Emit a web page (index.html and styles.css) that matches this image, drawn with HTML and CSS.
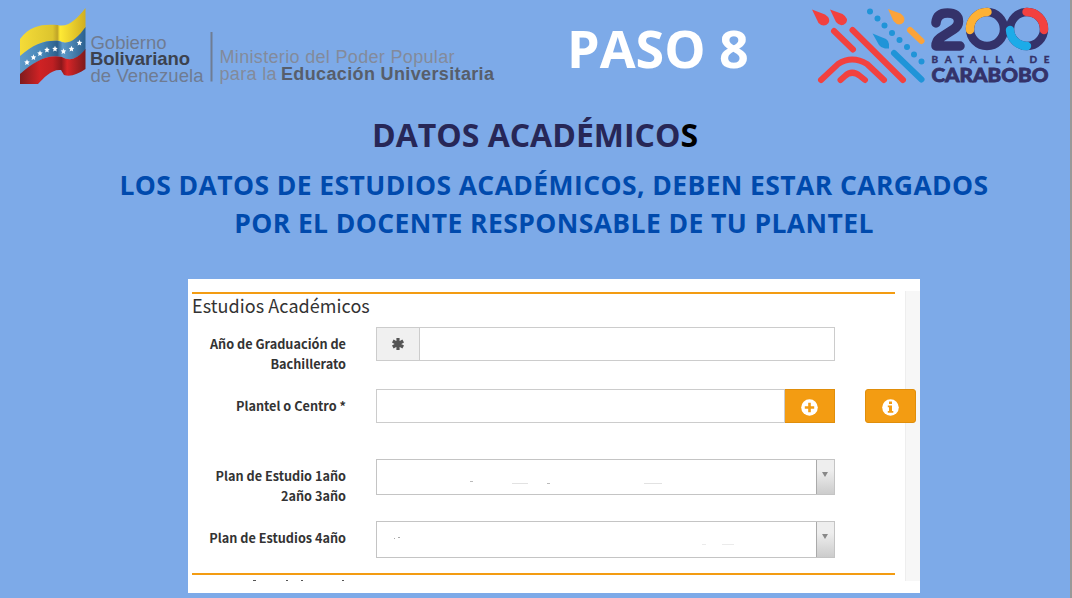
FILE: index.html
```html
<!DOCTYPE html>
<html lang="es">
<head>
<meta charset="utf-8">
<title>Paso 8 - Datos académicos</title>
<link rel="stylesheet" href="styles.css">
</head>
<body>
<main class="slide">
  <header class="header">
    <svg class="gov-logo" width="500" height="96" viewBox="0 0 500 96" role="img" aria-label="Gobierno Bolivariano de Venezuela">
      <defs>
        <linearGradient id="yellow" x1="0" x2="1"><stop offset="0" stop-color="#f5dc38"/><stop offset=".5" stop-color="#dcc42e"/><stop offset=".57" stop-color="#c0a428"/><stop offset=".61" stop-color="#ffea35"/><stop offset="1" stop-color="#d0ae22"/></linearGradient>
        <linearGradient id="blue" x1="0" x2="1"><stop offset="0" stop-color="#5f9bcb"/><stop offset=".35" stop-color="#4585b5"/><stop offset=".57" stop-color="#2c5f8c"/><stop offset=".65" stop-color="#5f9bc9"/><stop offset="1" stop-color="#2b608e"/></linearGradient>
        <linearGradient id="red" x1="0" x2="1"><stop offset="0" stop-color="#7e1b1d"/><stop offset=".3" stop-color="#cf2224"/><stop offset=".5" stop-color="#bf1f22"/><stop offset=".63" stop-color="#8c181b"/><stop offset=".72" stop-color="#d82527"/><stop offset="1" stop-color="#7d1a1c"/></linearGradient>
      </defs>
      <path fill="url(#yellow)" d="M20 39C31 24 45 24 57.500 25C68 28 77 19 85.500 8V28C77 40 69 46 60 41C45 40 34 44 20 57Z"/>
      <path fill="url(#blue)" d="M20 56C34 44 45 40 59 41C68 46 77 39 85.500 27V50C78 58 71 62 62 57C47 54 34 62 20 75Z"/>
      <path fill="url(#red)" d="M20 74C34 62 47 54 62 57C71 62 78 58 85.500 49V69C78 74 71 77 64 75L61 70C51 69 44 78 38 84H20Z"/>
      <g fill="#fff">
        <path id="star" d="M27 59.300L27.800 61.300L29.700 61.600L28.300 62.900L28.700 65L27 63.900L25 65L25.700 62.900L24.200 61.400L26.200 61.300Z"/>
        <use href="#star" x="6.500" y="-5"/><use href="#star" x="13" y="-9"/><use href="#star" x="20" y="-12.500"/><use href="#star" x="28" y="-13.500"/><use href="#star" x="36.500" y="-11"/><use href="#star" x="44.500" y="-13.500"/><use href="#star" x="52.500" y="-19.500"/>
      </g>
      <rect x="210.500" y="32" width="2" height="49.500" fill="#6f7d93"/>
      <g class="logo-text">
        <text x="90.500" y="48.500" textLength="76" fill="#6f7b91">Gobierno</text>
        <text x="90" y="65" textLength="100" class="bold" fill="#3c424f">Bolivariano</text>
        <text x="90.500" y="81.500" textLength="113" fill="#6f7b91">de Venezuela</text>
      </g>
      <g class="logo-text small">
        <text x="219.500" y="63.200" textLength="235" fill="#838a9b">Ministerio del Poder Popular</text>
        <text x="219.500" y="80.300" textLength="57" fill="#838a9b">para la</text>
        <text x="281" y="80.300" textLength="213" class="bold" fill="#575e6b">Educación Universitaria</text>
      </g>
    </svg>
    <h1 class="step">PASO 8</h1>
    <svg class="battle-logo" width="250" height="96" viewBox="805 0 250 96" role="img" aria-label="200 Batalla de Carabobo">
      <g fill="none" stroke-linecap="round" stroke-width="6">
        <path stroke="#f2413f" d="M834 31L853 49.500M852.500 30L903 80M821 80L838 64Q852 55 867 64L884 80M840.500 80L845 76Q852 69.500 860 76L865 80"/>
        <path stroke="#2094d8" d="M894 53L921.500 79.500"/>
        <path stroke="#fba33a" d="M910 30L921.500 41"/>
        <path stroke="#2094d8" d="M870 11.500h.01M877.500 18.500h.01M884.500 25.500h.01M892 33h.01M899.500 40h.01M907 47h.01M914 54.500h.01M921.500 61.500h.01"/>
      </g>
      <path fill="#f2413f" d="M812 9.500L825 14.500Q831 18.500 828.500 23Q824 28 818.500 23Z"/>
      <path fill="#f2413f" d="M830 9.500L842.500 14Q849 18.500 846 23Q841 28 836 22Z"/>
      <path fill="#fba33a" d="M888 9L900.500 13.500Q906.500 18 903.500 22.500Q898.500 27 893.500 21Z"/>
      <path fill="#2094d8" d="M872.500 33.500L886 39Q889 41 889 44V48.500H885Q881 48 879 45Z"/>
      <g fill="none" stroke="#34326a" stroke-width="8.400">
        <path stroke-linejoin="round" stroke-linecap="round" stroke-width="9.500" d="M936 23V22.500Q937 13 947.500 13Q958.500 13 958.500 21.500Q958.500 26 954 29L940 38Q936 41 936 46H960"/>
        <circle cx="987" cy="29" r="17"/>
        <circle cx="1027" cy="29" r="17"/>
      </g>
      <g fill="none" stroke-linecap="round" stroke-width="8.400">
        <path stroke="#fdb134" d="M970 30A17 17 0 0 1 987.500 12"/>
        <path stroke="#f2413f" d="M1026.500 12A17 17 0 0 1 1044 30"/>
        <path stroke="#1cabe8" d="M1010 30A17 17 0 0 0 1027 46"/>
      </g>
      <g class="battle-text" fill="#34326a" stroke="#34326a">
        <text x="931.500" y="63" font-size="10" stroke-width=".3" textLength="118">BATALLA DE</text>
        <text x="931.500" y="81.700" font-size="19.500" stroke-width=".8" textLength="117" lengthAdjust="spacingAndGlyphs">CARABOBO</text>
      </g>
    </svg>
  </header>

  <section class="intro">
    <h2 class="heading">DATOS ACADÉMICO<span class="heading-end">S</span></h2>
    <p class="lead">LOS DATOS DE ESTUDIOS ACADÉMICOS, DEBEN ESTAR CARGADOS<br>POR EL DOCENTE RESPONSABLE DE TU PLANTEL</p>
  </section>

  <section class="panel">
    <form class="studies">
      <h3 class="studies-title">Estudios Académicos</h3>
      <div class="row row-year">
        <div class="label">Año de Graduación de<br>Bachillerato</div>
        <div class="field">
          <span class="addon"><svg width="12" height="12" viewBox="-6 -6 12 12"><path stroke="#555" stroke-width="3.200" d="M0-6V6M-5.200-3L5.200 3M5.200-3L-5.200 3"/></svg></span>
          <span class="input"></span>
        </div>
      </div>
      <div class="row row-school">
        <div class="label">Plantel o Centro *</div>
        <div class="field">
          <span class="input"></span>
          <span class="button"><svg width="17" height="17" viewBox="0 0 17 17"><circle cx="8.500" cy="8.500" r="8.300" fill="#fff"/><path stroke="#f39c12" stroke-width="2.600" d="M8.500 3.800V13.200M3.800 8.500H13.200"/></svg></span>
        </div>
        <span class="button info"><svg width="17" height="17" viewBox="0 0 17 17"><circle cx="8.500" cy="8.500" r="8.300" fill="#fff"/><path fill="#f39c12" d="M7 2.500h3v2.500H7zM5.800 6.500H10v5.500h1.300v1.800H5.800V12H7V8.200H5.800z"/></svg></span>
      </div>
      <div class="row row-plan">
        <div class="label">Plan de Estudio 1año<br>2año 3año</div>
        <div class="field select">
          <span class="value"><svg width="438" height="34" viewBox="0 0 438 34" fill="none"><path stroke="#bbb" d="M93 21.500h3M170 23.500h3"/><path stroke="#e2e2e2" d="M135 23.500h16M267 23.500h18"/></svg></span>
          <span class="arrow"></span>
        </div>
      </div>
      <div class="row row-plan-four">
        <div class="label">Plan de Estudios 4año</div>
        <div class="field select">
          <span class="value"><svg width="438" height="35" viewBox="0 0 438 35" fill="none"><path stroke="#aaa" d="M17 16.500h1M21 15.500h2"/><path stroke="#ebebeb" d="M325 22.500h4M345 22.500h12"/></svg></span>
          <span class="arrow"></span>
        </div>
      </div>
    </form>
    <svg class="next-row" width="703" height="6" viewBox="0 0 703 6"><path stroke="#555" d="M61 5.500h3M94 5.500h2M109 5.500h2M150 5.500h2"/></svg>
    <div class="gutter"></div>
  </section>
</main>
</body>
</html>
```
FILE: styles.css
```css
* { box-sizing: border-box; }
body { margin: 0; background: #7daae8; }
.slide {
  width: 1072px; height: 598px; overflow: hidden;
  border-right: 2px solid #999;
  background: #7daae8;
  font-family: "Open Sans", "Noto Sans", sans-serif;
}
svg { display: block; }
h1, h2, h3, p { margin: 0; }
.header { display: flex; height: 96px; }
.gov-logo { flex: none; }
.logo-text { font: 18.500px "Liberation Sans", Arial, sans-serif; }
.small { font-size: 18px; }
.bold { font-weight: 700; }
.battle-text { font-family: Lato, "Open Sans", sans-serif; font-weight: 900; }
.step { width: 305px; padding-left: 67px; font-size: 52px; line-height: 96px; font-weight: 700; color: #fff; white-space: nowrap; }
.battle-logo { flex: none; }
.intro { height: 183px; padding-top: 15px; text-align: center; white-space: nowrap; }
.heading { font-size: 32px; line-height: 48px; color: #272757; }
.heading-end { color: #000; }
.lead { margin-top: 7px; padding-left: 38px; font-size: 26.500px; line-height: 38px; font-weight: 700; letter-spacing: .4px; color: #004aad; }
.panel {
  display: grid; grid-template-columns: 713px 15px; grid-template-rows: 283px 6px;
  justify-content: space-between;
  width: 732px; height: 314px; margin-left: 188px; padding: 13px 0 12px 4px;
  background: #fff;
  font-family: "Noto Sans CJK SC", sans-serif; color: #333;
}
.studies { width: 703px; height: 283px; border-top: 2px solid #f39c12; border-bottom: 2px solid #f39c12; }
.studies-title { height: 33px; font-size: 18px; line-height: 23px; letter-spacing: .06px; font-weight: 400; white-space: nowrap; }
.row { display: flex; width: 724px; }
.label { flex: none; width: 154px; padding-top: 7px; font-size: 12.700px; line-height: 20px; font-weight: 700; text-align: right; white-space: nowrap; }
.field { display: flex; flex: none; width: 459px; margin-left: 30px; }
.row-year { height: 62px; }
.row-year .field, .row-school .field { height: 34px; }
.row-school { height: 70px; }
.row-plan { height: 62px; }
.row-plan .field { height: 36px; }
.row-plan-four .field { height: 37px; }
.addon { display: flex; align-items: center; justify-content: center; width: 43px; border: 1px solid #ccc; border-right: 0; background: #f0f0f0; }
.input { flex: 1; border: 1px solid #ccc; }
.button { display: flex; align-items: center; justify-content: center; width: 50px; height: 34px; padding: 2px 1px 0 0; border: 1px solid #e08e0b; background: #f39c12; }
.row-school .field .button { border-left: 0; }
.info { width: 51px; margin-left: 30px; border-radius: 3px; z-index: 1; }
.select { border: 1px solid #c4c4c4; }
.value { flex: 1; }
.arrow { width: 18px; padding: 12px 0 0 5px; border-left: 1px solid #aaa; background: linear-gradient(#eee 30%, #ccc); }
.arrow::before { content: ""; display: block; border: 3.500px solid transparent; border-top: 5px solid #888; border-bottom: 0; width: 0; }
.next-row { grid-row: 2; }
.gutter { grid-column: 2; grid-row: 1 / 3; margin-top: -1px; background: #f7f7f7; border-left: 1px solid #eee; }
```
